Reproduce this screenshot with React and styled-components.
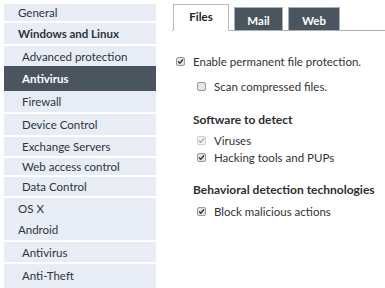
import React from "react";
import styled, { createGlobalStyle } from "styled-components";

const GlobalStyle = createGlobalStyle`
  html, body {
    margin: 0;
    padding: 0;
    background: #ffffff;
    font-family: Lato, "Liberation Sans", sans-serif;
  }
`;

const menu = [
  { label: "General", h: 17, level: 0 },
  { label: "Windows and Linux", h: 21, level: 0, bold: true },
  { label: "Advanced protection", h: 20, level: 1, noSep: true },
  { label: "Antivirus", h: 25, level: 1, active: true, noSep: true },
  { label: "Firewall", h: 21, level: 1 },
  { label: "Device Control", h: 21, level: 1 },
  { label: "Exchange Servers", h: 19, level: 1 },
  { label: "Web access control", h: 17, level: 1 },
  { label: "Data Control", h: 19, level: 1 },
  { label: "OS X", h: 20, level: 0, noSep: true },
  { label: "Android", h: 22, level: 0 },
  { label: "Antivirus", h: 20, level: 1 },
  { label: "Anti-Theft", h: 22, level: 1, noSep: true },
];

function Check({ checked, disabled }) {
  return (
    <Box disabled={disabled}>
      {checked && (
        <svg width="7" height="7" viewBox="0 0 7 7">
          <path
            d="M1 3.6 L2.8 5.3 L6 1.4"
            fill="none"
            stroke={disabled ? "#a8a8a8" : "#333"}
            strokeWidth="1.4"
          />
        </svg>
      )}
    </Box>
  );
}

export default function App() {
  return (
    <>
      <GlobalStyle />
      <Page>
        <Sidebar>
          {menu.map((item, i) => (
            <Item
              key={i}
              h={item.h}
              level={item.level}
              bold={item.bold}
              active={item.active}
              noSep={item.noSep || i === menu.length - 1}
            >
              {item.label}
            </Item>
          ))}
        </Sidebar>
        <Main>
          <Tabs>
            <Tab active>Files</Tab>
            <Tab>Mail</Tab>
            <Tab>Web</Tab>
          </Tabs>
          <Content>
            <Row top={23}>
              <Check checked />
              <Label>Enable permanent file protection.</Label>
            </Row>
            <Row top={11} indent>
              <Check />
              <Label>Scan compressed files.</Label>
            </Row>
            <Heading top={19}>Software to detect</Heading>
            <Row top={6} indent>
              <Check checked disabled />
              <Label>Viruses</Label>
            </Row>
            <Row top={3} indent>
              <Check checked />
              <Label>Hacking tools and PUPs</Label>
            </Row>
            <Heading top={18}>Behavioral detection technologies</Heading>
            <Row top={7} indent>
              <Check checked />
              <Label>Block malicious actions</Label>
            </Row>
          </Content>
        </Main>
      </Page>
    </>
  );
}

const Page = styled.div`
  display: flex;
  width: 385px;
  height: 288px;
  overflow: hidden;
`;

const Sidebar = styled.div`
  width: 152px;
  margin: 4px 0 0 4px;
  background: #e8ecf4;
  display: flex;
  flex-direction: column;
  flex-shrink: 0;
`;

const Item = styled.div`
  height: ${(p) => p.h}px;
  display: flex;
  align-items: center;
  padding-left: ${(p) => (p.level ? 18 : 14)}px;
  font-size: 11.5px;
  font-weight: ${(p) => (p.bold || p.active ? 700 : 400)};
  color: ${(p) => (p.active ? "#ffffff" : "#2e3440")};
  background: ${(p) => (p.active ? "#4b5560" : "transparent")};
  border-bottom: ${(p) => (p.noSep ? "0" : "2px solid #ffffff")};
  white-space: nowrap;
`;

const Main = styled.div`
  flex: 1;
  display: flex;
  flex-direction: column;
`;

const Tabs = styled.div`
  display: flex;
  align-items: flex-end;
  gap: 5px;
  margin: 4px 0 0 16px;
  padding-left: 1px;
  height: 26px;
  border-bottom: 1px solid #a9b0b8;
`;

const Tab = styled.div`
  height: ${(p) => (p.active ? 27 : 23)}px;
  width: ${(p) => (p.active ? 56 : 49)}px;
  margin-bottom: ${(p) => (p.active ? -1 : 0)}px;
  box-sizing: border-box;
  display: flex;
  align-items: center;
  justify-content: center;
  padding-top: ${(p) => (p.active ? 0 : 2)}px;
  padding-bottom: ${(p) => (p.active ? 2 : 0)}px;
  font-size: 11.5px;
  font-weight: 700;
  color: ${(p) => (p.active ? "#222" : "#ffffff")};
  background: ${(p) => (p.active ? "#ffffff" : "#4b5560")};
  border: 1px solid ${(p) => (p.active ? "#b5bbc2" : "#a9b0b8")};
  border-bottom: ${(p) => (p.active ? "1px solid #ffffff" : "0")};
  &:nth-child(3) {
    width: 52px;
  }
`;

const Content = styled.div`
  display: flex;
  flex-direction: column;
  padding-left: 20px;
`;

const Row = styled.div`
  display: flex;
  align-items: center;
  gap: 8px;
  margin-top: ${(p) => p.top}px;
  margin-left: ${(p) => (p.indent ? 21 : 0)}px;
  height: 14px;
`;

const Box = styled.span`
  width: 9px;
  height: 9px;
  box-sizing: border-box;
  border: 1px solid ${(p) => (p.disabled ? "#cfcfcf" : "#9a9a9a")};
  border-radius: 2px;
  background: ${(p) => (p.disabled ? "#f2f2f2" : "#e4e4e4")};
  display: flex;
  align-items: center;
  justify-content: center;
  flex-shrink: 0;
`;

const Label = styled.span`
  font-size: 11.5px;
  color: #333;
  white-space: nowrap;
`;

const Heading = styled.div`
  margin-top: ${(p) => p.top}px;
  margin-left: 17px;
  font-size: 12px;
  font-weight: 700;
  color: #2e2e2e;
  white-space: nowrap;
`;
